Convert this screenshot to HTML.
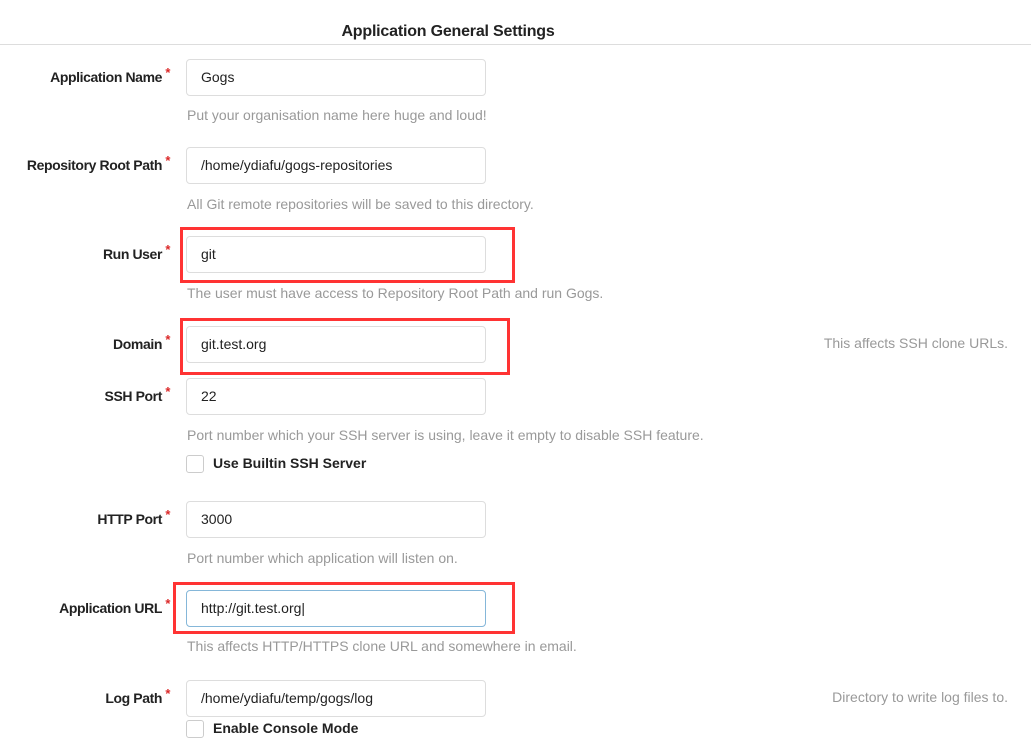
<!DOCTYPE html>
<html><head><meta charset="utf-8"><style>
body{margin:0;width:1031px;height:748px;background:#fff;position:relative;overflow:hidden;font-family:"Liberation Sans",sans-serif;}
.h{position:absolute;left:0;top:23px;width:896px;text-align:center;font-weight:bold;font-size:16px;color:#222;letter-spacing:-0.2px;}
.line{position:absolute;left:0;top:44px;width:1031px;height:1px;background:#ddd;}
.l{position:absolute;right:869px;font-weight:bold;font-size:14px;color:#222;text-align:right;white-space:nowrap;letter-spacing:-0.4px;}
.l:after{content:"*";color:#db2828;position:absolute;right:-8px;top:-4px;font-size:13px;}
.i{position:absolute;left:186px;height:35px;border:1px solid #ddd;border-radius:4px;font-size:14px;color:#222;line-height:35px;padding-left:14px;box-sizing:content-box;width:284px;}
.f{border-color:#85b7d9;}
.t{position:absolute;left:187px;font-size:14px;color:#999;white-space:nowrap;}
.r{position:absolute;font-size:14px;color:#999;right:23px;}
.box{position:absolute;border:3px solid #f33;}
.cb{position:absolute;left:186px;width:16px;height:16px;border:1px solid #ccc;border-radius:3px;}
.cl{position:absolute;left:213px;font-weight:bold;font-size:14px;color:#222;}
</style></head><body>
<div class="h">Application General Settings</div>
<div class="line"></div>

<div class="l" style="top:69px">Application Name</div>
<div class="i" style="top:59px">Gogs</div>
<div class="t" style="top:107px">Put your organisation name here huge and loud!</div>

<div class="l" style="top:157px">Repository Root Path</div>
<div class="i" style="top:147px">/home/ydiafu/gogs-repositories</div>
<div class="t" style="top:196px">All Git remote repositories will be saved to this directory.</div>

<div class="box" style="left:180px;top:227px;width:329px;height:50px"></div>
<div class="l" style="top:246px">Run User</div>
<div class="i" style="top:236px">git</div>
<div class="t" style="top:285px">The user must have access to Repository Root Path and run Gogs.</div>

<div class="box" style="left:180px;top:318px;width:324px;height:51px"></div>
<div class="l" style="top:336px">Domain</div>
<div class="i" style="top:326px">git.test.org</div>
<div class="r" style="top:335px">This affects SSH clone URLs.</div>

<div class="l" style="top:388px">SSH Port</div>
<div class="i" style="top:378px">22</div>
<div class="t" style="top:427px">Port number which your SSH server is using, leave it empty to disable SSH feature.</div>
<div class="cb" style="top:455px"></div>
<div class="cl" style="top:455px">Use Builtin SSH Server</div>

<div class="l" style="top:511px">HTTP Port</div>
<div class="i" style="top:501px">3000</div>
<div class="t" style="top:550px">Port number which application will listen on.</div>

<div class="box" style="left:173px;top:582px;width:336px;height:46px"></div>
<div class="l" style="top:600px">Application URL</div>
<div class="i f" style="top:590px">http://git.test.org|</div>
<div class="t" style="top:638px">This affects HTTP/HTTPS clone URL and somewhere in email.</div>

<div class="l" style="top:690px">Log Path</div>
<div class="i" style="top:680px">/home/ydiafu/temp/gogs/log</div>
<div class="r" style="top:689px">Directory to write log files to.</div>
<div class="cb" style="top:720px"></div>
<div class="cl" style="top:720px">Enable Console Mode</div>
</body></html>
